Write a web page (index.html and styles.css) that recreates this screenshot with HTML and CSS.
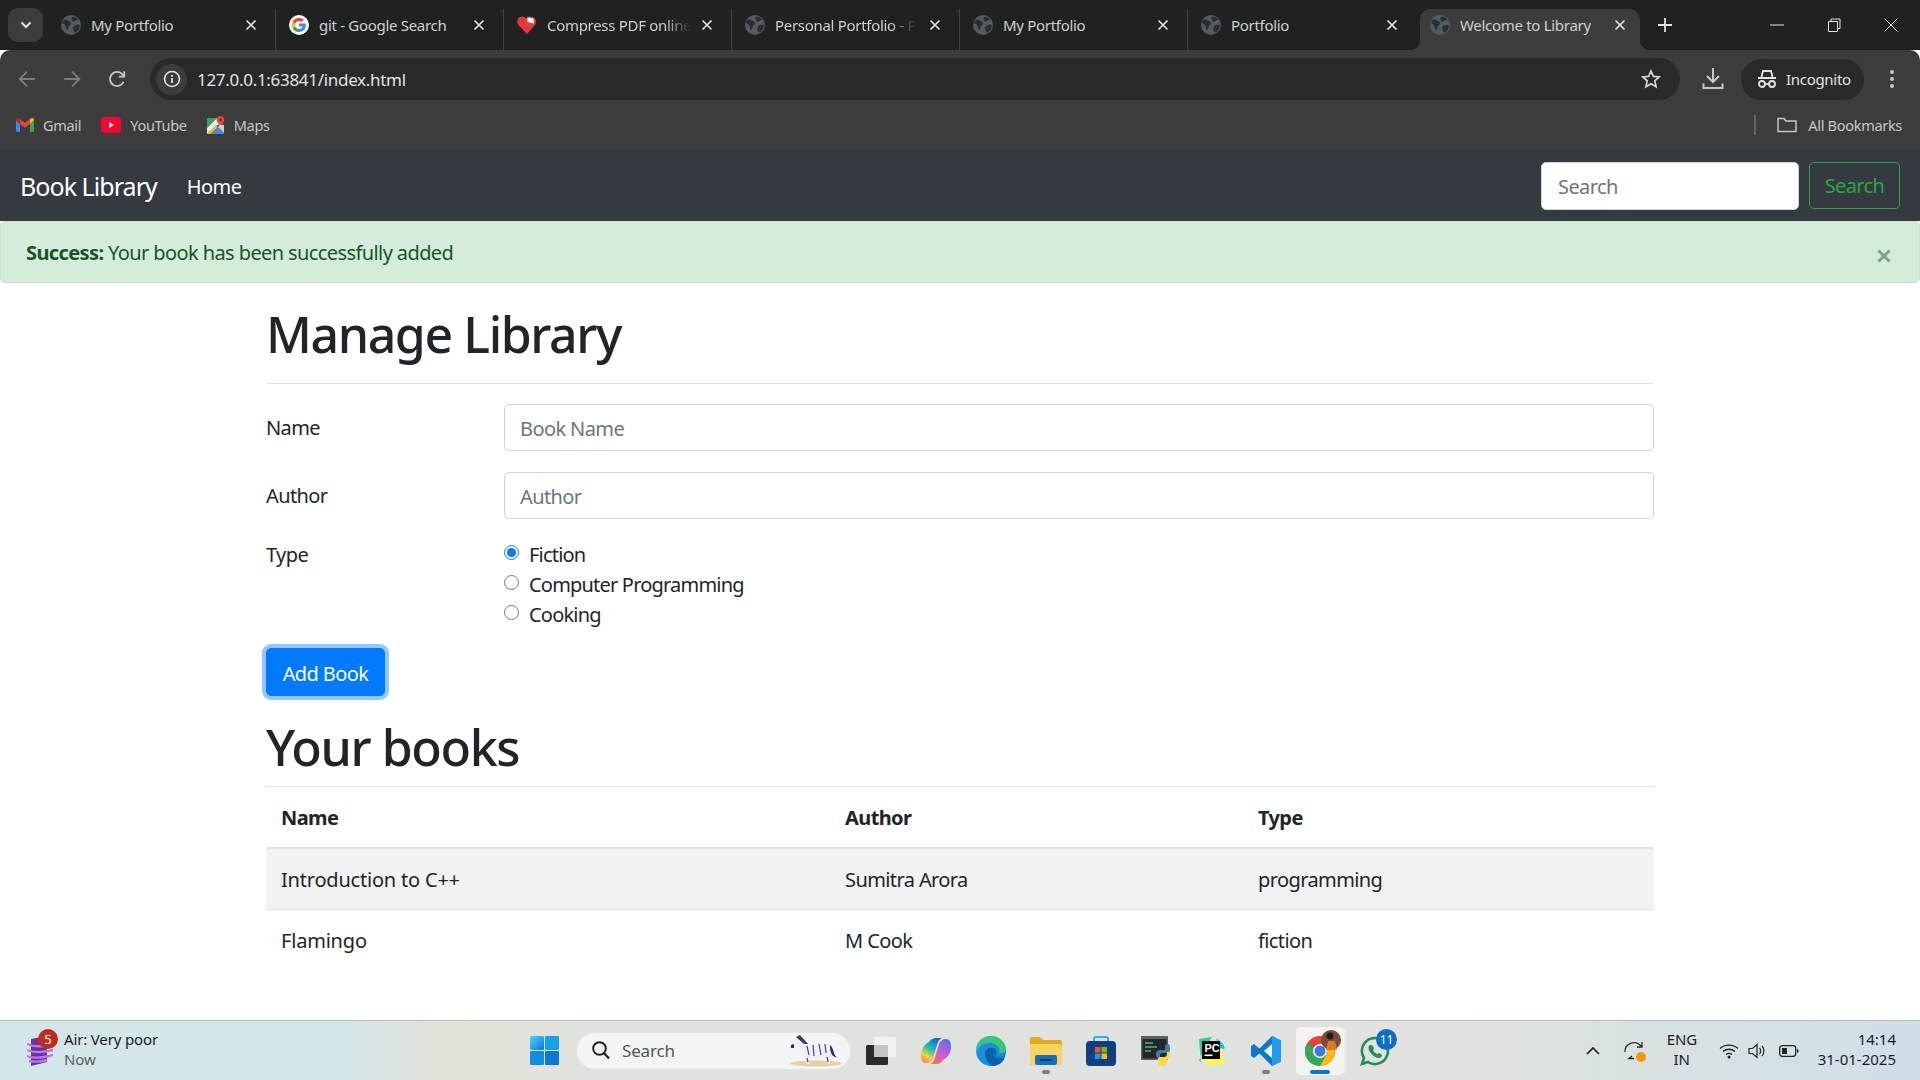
FILE: index.html
```html
<!DOCTYPE html>
<html lang="en">

<head>
    <meta charset="UTF-8">
    <title>Welcome to Library</title>
    <link rel="stylesheet" href="styles.css">
</head>

<body>
    <svg class="sprites" width="0" height="0">
        <symbol id="globe" viewBox="0 0 18 18">
            <circle cx="9" cy="9" r="9" fill="#555a60" />
            <path d="M2 4.500c2-1 3.500-.5 4.500.5s2.500 1 2.500 2.500-1.500 1.500-2 3-.5 3-1.500 3-1-2-1.500-3.500S2.500 8 1 7.500zM10 1.500c2 0 4 .5 5.500 2.500-1 1-2.500.5-3 1.500s-2 .5-2.500-.5-1-2.500 0-3.500zM12 10c1.500-1 3.500-1.500 5-1 0 3-1.500 5.500-4 7-1-1-2-2-2-3.500s0-2 1-2.500z" fill="#2b2d30" />
        </symbol>
        <symbol id="close-x" viewBox="0 0 12 12">
            <path d="M1.500 1.500l9 9m0-9l-9 9" fill="none" stroke="currentColor" stroke-width="1.700" />
        </symbol>
    </svg>

    <header class="chrome">
        <div class="tab-strip">
            <div class="tab-menu">
                <svg width="12" height="8" viewBox="0 0 12 8"><path d="M1.500 1.500L6 6l4.500-4.500" fill="none" stroke="#e3e3e3" stroke-width="2" /></svg>
            </div>
            <div class="tab">
                <svg class="tab-icon"><use href="#globe" /></svg>
                <span class="tab-title">My Portfolio</span>
                <svg class="tab-close"><use href="#close-x" /></svg>
            </div>
            <div class="tab">
                <svg class="tab-icon" viewBox="0 0 20 20">
                    <circle cx="10" cy="10" r="10" fill="#fff" />
                    <path d="M16.500 8.500H10v3h3.700c-.5 1.600-2 2.500-3.700 2.500V17c3.800 0 6.800-2.700 6.800-6.700 0-.7-.1-1.300-.3-1.800z" fill="#4285f4" />
                    <path d="M10 14c-1.800 0-3.300-1.100-3.800-2.800l-2.700 2c1.200 2.300 3.700 3.800 6.500 3.800z" fill="#34a853" />
                    <path d="M6.200 11.200C6 10.400 6 9.600 6.200 8.800l-2.700-2c-1 2-1 4.400 0 6.400z" fill="#fbbc05" />
                    <path d="M10 6c1 0 1.900.3 2.600 1l2.300-2.300C13.600 3.500 11.900 3 10 3 7.200 3 4.700 4.500 3.500 6.800l2.700 2C6.700 7.100 8.200 6 10 6z" fill="#ea4335" />
                </svg>
                <span class="tab-title">git - Google Search</span>
                <svg class="tab-close"><use href="#close-x" /></svg>
            </div>
            <div class="tab">
                <svg class="tab-icon" viewBox="0 0 20 20">
                    <path d="M10 19L1.800 10.500C-.5 8-.2 3.900 2.500 2.300 5 .9 7.500 1.500 9 3.500 10.500 1.500 14 .8 16.500 2.300c3 1.800 3.200 5.800 1 8.200z" fill="#e53935" />
                    <path d="M10.500 2.500l6 1 .5 5-6.500-1.500z" fill="#fff" />
                </svg>
                <span class="tab-title faded">Compress PDF online</span>
                <svg class="tab-close"><use href="#close-x" /></svg>
            </div>
            <div class="tab">
                <svg class="tab-icon"><use href="#globe" /></svg>
                <span class="tab-title faded">Personal Portfolio - P</span>
                <svg class="tab-close"><use href="#close-x" /></svg>
            </div>
            <div class="tab">
                <svg class="tab-icon"><use href="#globe" /></svg>
                <span class="tab-title">My Portfolio</span>
                <svg class="tab-close"><use href="#close-x" /></svg>
            </div>
            <div class="tab">
                <svg class="tab-icon"><use href="#globe" /></svg>
                <span class="tab-title">Portfolio</span>
                <svg class="tab-close"><use href="#close-x" /></svg>
            </div>
            <div class="tab active">
                <svg class="tab-icon"><use href="#globe" /></svg>
                <span class="tab-title">Welcome to Library</span>
                <svg class="tab-close"><use href="#close-x" /></svg>
            </div>
            <svg class="new-tab" width="14" height="14" viewBox="0 0 14 14"><path d="M7 0v14M0 7h14" stroke="#e3e3e3" stroke-width="1.800" /></svg>
            <div class="window-controls">
                <svg width="14" height="14" viewBox="0 0 14 14"><path d="M0 7h14" stroke="#e3e3e3" stroke-width="1" /></svg>
                <svg width="14" height="14" viewBox="0 0 14 14"><path d="M1.500 3.500h9v10h-9zM4 3.500V1h9v9.500h-2.500" fill="none" stroke="#e3e3e3" /></svg>
                <svg width="14" height="14" viewBox="0 0 14 14"><path d="M.5.500l13 13m0-13l-13 13" stroke="#e3e3e3" stroke-width="1" /></svg>
            </div>
        </div>

        <div class="toolbar">
            <svg class="nav-icon" viewBox="0 0 16 16"><path d="M15 8H2m6-6.500L1.500 8 8 14.500" fill="none" stroke="#7d7d7d" stroke-width="1.600" /></svg>
            <svg class="nav-icon" viewBox="0 0 16 16"><path d="M1 8h13M8 1.500L14.500 8 8 14.500" fill="none" stroke="#7d7d7d" stroke-width="1.600" /></svg>
            <svg class="nav-icon" viewBox="0 0 16 16"><path d="M13.800 10.500A6.300 6.300 0 1 1 12.500 3.500L14.500 5.500M14.500 1v4.800H9.700" fill="none" stroke="#c7c7c7" stroke-width="1.600" /></svg>
            <div class="omnibox">
                <div class="site-info">
                    <svg width="18" height="18" viewBox="0 0 18 18"><circle cx="9" cy="9" r="7.500" fill="none" stroke="#e3e3e3" stroke-width="1.600" /><path d="M9 8v5M9 5v1.800" stroke="#e3e3e3" stroke-width="1.800" /></svg>
                </div>
                <span class="url">127.0.0.1:63841/index.html</span>
                <svg class="star" width="20" height="20" viewBox="0 0 20 20"><path d="M10 2l2.400 5.400 5.800.6-4.400 3.900 1.300 5.800L10 14.700l-5.100 3 1.300-5.800L1.800 8l5.800-.6z" fill="none" stroke="#d5d5d5" stroke-width="1.700" /></svg>
            </div>
            <svg class="download" width="22" height="24" viewBox="0 0 22 24"><path d="M11 1v14m-6-6l6 6 6-6M1.500 16.500v4.500h19v-4.500" fill="none" stroke="#c7c7c7" stroke-width="2" /></svg>
            <div class="incognito">
                <svg width="20" height="20" viewBox="0 0 20 20">
                    <path d="M4.500 8L6 2h8l1.500 6M1 9h18" fill="none" stroke="#e3e3e3" stroke-width="1.800" />
                    <circle cx="5" cy="15" r="3" fill="none" stroke="#e3e3e3" stroke-width="1.800" />
                    <circle cx="15" cy="15" r="3" fill="none" stroke="#e3e3e3" stroke-width="1.800" />
                    <path d="M8 15h4" stroke="#e3e3e3" stroke-width="1.800" />
                </svg>
                <span>Incognito</span>
            </div>
            <svg class="kebab" width="6" height="20" viewBox="0 0 6 20"><circle cx="3" cy="3" r="2" fill="#c7c7c7" /><circle cx="3" cy="10" r="2" fill="#c7c7c7" /><circle cx="3" cy="17" r="2" fill="#c7c7c7" /></svg>
        </div>

        <div class="bookmarks">
            <div class="bookmark">
                <svg width="18" height="14" viewBox="0 0 18 14">
                    <path d="M0 2v10.500c0 .8.600 1.500 1.500 1.500H4V6z" fill="#4285f4" />
                    <path d="M14 6v8h2.500c.9 0 1.500-.7 1.500-1.500V2z" fill="#34a853" />
                    <path d="M4 6l5 3.800L14 6V1L9 4.800 4 1z" fill="#ea4335" />
                    <path d="M0 2l4 4V1L2.500.2C1.300-.4 0 .6 0 2z" fill="#c5221f" />
                    <path d="M18 2l-4 4V1l1.500-.8C16.700-.4 18 .6 18 2z" fill="#fbbc04" />
                </svg>
                <span>Gmail</span>
            </div>
            <div class="bookmark">
                <svg width="20" height="16" viewBox="0 0 20 16">
                    <rect width="20" height="16" rx="4" fill="#ff0033" />
                    <path d="M8 5l5 3-5 3z" fill="#fff" />
                </svg>
                <span>YouTube</span>
            </div>
            <div class="bookmark">
                <svg width="18" height="18" viewBox="0 0 18 18">
                    <path d="M0 2h10L0 12z" fill="#34a853" />
                    <path d="M0 12L10 2l3 6-4 2-9 8z" fill="#e8eaed" />
                    <path d="M0 18l9-8 2 1-7 7z" fill="#fbbc04" />
                    <path d="M4 18l7-7 6 6v1z" fill="#4285f4" />
                    <path d="M13 8l4 1v8l-6-6z" fill="#c9cdd2" />
                    <path d="M13.500 0a3.800 3.800 0 0 0-3.800 3.800c0 2.800 3.800 5.700 3.800 5.700s3.800-2.900 3.800-5.700A3.800 3.800 0 0 0 13.500 0z" fill="#ea4335" />
                    <circle cx="13.500" cy="3.800" r="1.300" fill="#a50e0e" />
                </svg>
                <span>Maps</span>
            </div>
            <div class="all-bookmarks">
                <svg width="20" height="16" viewBox="0 0 20 16"><path d="M1 14.500v-13h6l2 2.500h10v10.500z" fill="none" stroke="#c7c7c7" stroke-width="1.500" /></svg>
                <span>All Bookmarks</span>
            </div>
        </div>
    </header>

    <nav class="navbar">
        <a class="navbar-brand">Book Library</a>
        <a class="nav-link">Home</a>
        <form class="navbar-search">
            <input type="text" class="search-input" placeholder="Search">
            <button type="button" class="search-btn">Search</button>
        </form>
    </nav>

    <div class="alert">
        <span><strong>Success:</strong> Your book has been successfully added</span>
        <svg class="alert-close" width="14" height="14" viewBox="0 0 14 14"><path d="M1.500 1.500l11 11m0-11l-11 11" stroke="#7aa584" stroke-width="3" /></svg>
    </div>

    <main class="container">
        <h1>Manage Library</h1>
        <hr>
        <form>
            <div class="form-row">
                <label>Name</label>
                <input type="text" class="form-control" placeholder="Book Name">
            </div>
            <div class="form-row">
                <label>Author</label>
                <input type="text" class="form-control" placeholder="Author">
            </div>
            <div class="form-row type-row">
                <label>Type</label>
                <div class="radios">
                    <label class="radio"><input type="radio" name="type" checked>Fiction</label>
                    <label class="radio"><input type="radio" name="type">Computer Programming</label>
                    <label class="radio"><input type="radio" name="type">Cooking</label>
                </div>
            </div>
            <button type="button" class="btn-primary">Add Book</button>
        </form>

        <h1 class="books-title">Your books</h1>
        <hr class="books-rule">
        <table>
            <thead>
                <tr>
                    <th class="col-name">Name</th>
                    <th class="col-author">Author</th>
                    <th>Type</th>
                </tr>
            </thead>
            <tbody>
                <tr>
                    <td>Introduction to C++</td>
                    <td>Sumitra Arora</td>
                    <td>programming</td>
                </tr>
                <tr>
                    <td>Flamingo</td>
                    <td>M Cook</td>
                    <td>fiction</td>
                </tr>
            </tbody>
        </table>
    </main>

    <footer class="taskbar">
        <div class="weather">
            <div class="weather-icon">
                <svg width="26" height="32" viewBox="0 0 26 32">
                    <path d="M4 4l16-3v26L4 31z" fill="#6d2fa3" />
                    <path d="M0 9c7 3 15 3 25 1M0 15c7 3 15 3 26 0M0 21c7 3 15 2 26-1M2 26c6 1 12 1 18-1" fill="none" stroke="#b57ce0" stroke-width="2.400" />
                </svg>
                <span class="weather-badge">5</span>
            </div>
            <div class="weather-text">
                <span>Air: Very poor</span>
                <span class="weather-now">Now</span>
            </div>
        </div>

        <div class="task-center">
            <svg class="win-logo" width="29" height="29" viewBox="0 0 29 29">
                <defs>
                    <linearGradient id="win" x1="0" y1="0" x2="1" y2="1">
                        <stop offset="0" stop-color="#4fd2ff" />
                        <stop offset="1" stop-color="#0a78d6" />
                    </linearGradient>
                </defs>
                <rect width="14" height="14" rx="1.500" fill="url(#win)" />
                <rect x="15" width="14" height="14" rx="1" fill="#17a2ec" />
                <rect y="15" width="14" height="14" rx="1" fill="#0f8fe4" />
                <rect x="15" y="15" width="14" height="14" rx="1" fill="#0a78d6" />
            </svg>
            <div class="task-search">
                <svg width="18" height="19" viewBox="0 0 18 19"><circle cx="7.500" cy="7.500" r="6.300" fill="none" stroke="#222" stroke-width="2" /><path d="M12 12l5 5.500" stroke="#222" stroke-width="2.200" /></svg>
                <span>Search</span>
                <svg class="zebra" width="54" height="33" viewBox="0 0 54 33">
                    <ellipse cx="26" cy="29.500" rx="26" ry="3" fill="#e8cfa6" />
                    <path d="M1 11L7 3l2-2 2 3 7 7 15-2c5 0 8 3 8 7l-1 14h-2l-2-8-6 2H20l-1 6h-2l-2-7-2-8-5-2-5 1z" fill="#efeef5" />
                    <path d="M17 12l2 9M23 11l1 11M29 10l2 11M35 10l1 9M17 24l1 4M37 23l1 5" stroke="#4a4573" stroke-width="1.200" fill="none" />
                    <path d="M6 3l4-2 8 9-4 0z" fill="#3f3a66" />
                    <path d="M40 11c4 3 3 9 7 13l-4-2c-2-2-3-6-3-9z" fill="#2f2a6b" />
                    <path d="M1 11l3-1 0 4-3 0z" fill="#2f2a50" />
                </svg>
            </div>
            <div class="task-icon">
                <svg width="30" height="28" viewBox="0 0 30 28">
                    <rect x="0" y="8" width="22" height="20" rx="1.500" fill="#2a2a2a" />
                    <rect x="8" y="0" width="22" height="20" rx="1.500" fill="#f2f3f1" />
                    <rect x="8" y="8" width="14" height="12" fill="#c4c4c4" />
                </svg>
            </div>
            <div class="task-icon">
                <svg width="30" height="30" viewBox="0 0 30 30">
                    <defs>
                        <linearGradient id="cop1" x1="0.700" y1="0" x2="0.200" y2="1">
                            <stop offset="0" stop-color="#1a5fe0" />
                            <stop offset=".45" stop-color="#22c3a6" />
                            <stop offset=".75" stop-color="#f4d23c" />
                            <stop offset="1" stop-color="#f7814a" />
                        </linearGradient>
                        <linearGradient id="cop2" x1="0.700" y1="0" x2="0.200" y2="1">
                            <stop offset="0" stop-color="#5b6df0" />
                            <stop offset=".45" stop-color="#c35be0" />
                            <stop offset=".8" stop-color="#f2609a" />
                            <stop offset="1" stop-color="#f7814a" />
                        </linearGradient>
                    </defs>
                    <path d="M8 6C10 3 12 2 15 2H21C18 3 17 6 16 9L12 22C11 25 8 27 5 27C1 27 0 23 0 19C0 14 3 8 8 6Z" fill="url(#cop1)" />
                    <path d="M22 24C20 27 18 28 15 28H9C12 27 13 24 14 21L18 8C19 5 22 3 25 3C29 3 30 7 30 11C30 16 27 22 22 24Z" fill="url(#cop2)" />
                </svg>
            </div>
            <div class="task-icon">
                <svg width="30" height="30" viewBox="0 0 30 30">
                    <defs>
                        <linearGradient id="edge" x1="0" y1="0" x2="1" y2="1">
                            <stop offset="0" stop-color="#2fc6e8" />
                            <stop offset="1" stop-color="#0b5fb3" />
                        </linearGradient>
                    </defs>
                    <circle cx="15" cy="15" r="15" fill="url(#edge)" />
                    <path d="M1 17C3 8 12 5 20 8c5 2 9 6 9 10-1 2-5 3-8 2 2-2 2-6-1-8-4-3-11-1-11 6 0 6 6 10 12 11-8 3-19-2-20-12z" fill="#1a8fd8" />
                    <path d="M30 14c0-8-7-14-15-14C7 0 1 5 0 13 3 7 10 5 16 7c6 2 9 6 7 10 3 1 6-1 7-3z" fill="#37c871" />
                    <path d="M9 17c0-4 4-6 8-5 2 1 4 3 3 6-1 1-3 2-4 1 5 3 8 6 13 2-2 6-7 9-13 9-4-2-7-8-7-13z" fill="#0b5fb3" />
                </svg>
            </div>
            <div class="task-icon running">
                <svg width="32" height="28" viewBox="0 0 32 28">
                    <path d="M0 2c0-1 1-2 2-2h8l3 3h17c1 0 2 1 2 2v21c0 1-1 2-2 2H2c-1 0-2-1-2-2z" fill="#e5a823" />
                    <path d="M0 7h30c1 0 2 1 2 2v17c0 1-1 2-2 2H2c-1 0-2-1-2-2z" fill="#fbd35d" />
                    <rect x="5" y="18" width="22" height="10" rx="2" fill="#0f70c0" />
                    <rect x="10" y="22" width="12" height="2" fill="#063a6e" />
                </svg>
            </div>
            <div class="task-icon">
                <svg width="30" height="30" viewBox="0 0 30 30">
                    <path d="M8 6V3c0-1 1-2 2-2h10c1 0 2 1 2 2v3" fill="none" stroke="#27b0f0" stroke-width="2" />
                    <rect y="5" width="30" height="25" rx="4" fill="#123f7e" />
                    <rect x="9" y="11" width="5.500" height="5.500" fill="#f25022" />
                    <rect x="15.500" y="11" width="5.500" height="5.500" fill="#7fba00" />
                    <rect x="9" y="17.500" width="5.500" height="5.500" fill="#00a4ef" />
                    <rect x="15.500" y="17.500" width="5.500" height="5.500" fill="#ffb900" />
                </svg>
            </div>
            <div class="task-icon">
                <svg width="30" height="30" viewBox="0 0 30 30">
                    <rect x="0" y="0" width="27" height="24" fill="#5a6168" />
                    <rect x="1.500" y="3" width="24" height="19.500" fill="#23282d" />
                    <path d="M4 7h8M4 11h12M4 15h6" stroke="#58b368" stroke-width="1.500" />
                    <path d="M15 18c0-3 2-4 4-4h5v-3c0-2 1-3 3-3s2 3 2 5c0 3-1 4-3 4h-5c-1 0-2 1-2 2v3h-2c-1 0-2-2-2-4z" fill="#3f7cad" />
                    <path d="M17 27c0 2 2 3 4 3s5-1 5-3v-3c0-1 2-1 3-3 1-2 0-5-2-5h-1v2c0 2-1 3-3 3h-4c-1 0-2 1-2 2z" fill="#ffd845" />
                </svg>
            </div>
            <div class="task-icon">
                <svg width="30" height="30" viewBox="0 0 30 30">
                    <path d="M3 3l13-2-6 9-7 14 2 3z" fill="#21d789" />
                    <path d="M20 2l7 6 2 4-4 2z" fill="#07c3f2" />
                    <path d="M5 22l21-10 2 16-16 1-4-3z" fill="#fcf84a" />
                    <rect x="6" y="5" width="18" height="18" fill="#000" />
                    <text class="pycharm-text" x="8.500" y="15.500">PC</text>
                    <rect x="8.500" y="18.500" width="8" height="1.600" fill="#fff" />
                </svg>
            </div>
            <div class="task-icon running">
                <svg width="30" height="30" viewBox="0 0 30 30">
                    <path d="M21 0l9 4.500v21L21 30 8.500 17.500 3 22l-3-2v-10l3-2 5.500 4.500z" fill="#0a7ac9" />
                    <path d="M21 0l9 4.500v21L21 30z" fill="#1f9cf0" />
                    <path d="M21 8l-8 7 8 7z" fill="#fff" opacity=".95" />
                </svg>
            </div>
            <div class="task-icon chrome-app">
                <svg width="30" height="30" viewBox="0 0 30 30">
                    <circle cx="15" cy="15" r="15" fill="#ea4335" />
                    <path d="M15 15L2 7.500A15 15 0 0 0 15 30l7.500-13z" fill="#34a853" />
                    <path d="M15 8h13a15 15 0 0 1-13 22l7.500-13z" fill="#fbbc05" />
                    <circle cx="15" cy="15" r="7" fill="#fff" />
                    <circle cx="15" cy="15" r="5.500" fill="#3b78e7" />
                </svg>
                <svg class="chrome-avatar" width="20" height="20" viewBox="0 0 20 20">
                    <circle cx="10" cy="10" r="10" fill="#7a4a3a" />
                    <circle cx="9" cy="6" r="3.500" fill="#2b1a14" />
                    <path d="M5 20l2-9h7l2 9z" fill="#e07a1f" />
                </svg>
            </div>
            <div class="task-icon">
                <svg width="30" height="30" viewBox="0 0 30 30">
                    <path d="M15 2a13 13 0 0 0-11 20L2 28l6-2a13 13 0 1 0 7-24z" fill="none" stroke="#1e8e5a" stroke-width="2.600" />
                    <path d="M10 9c-2 1-2 4 0 7s6 6 9 6c2 0 3-2 3-3l-3-2-2 1c-2-1-3-2-4-4l1-2-2-3z" fill="#1e8e5a" />
                </svg>
                <span class="whatsapp-badge">11</span>
            </div>
        </div>

        <div class="tray">
            <svg class="tray-chevron" width="14" height="8" viewBox="0 0 14 8"><path d="M1 7l6-6 6 6" fill="none" stroke="#1f1f1f" stroke-width="1.700" /></svg>
            <div class="tray-sync">
                <svg width="20" height="20" viewBox="0 0 20 20"><path d="M1 11a9 8.500 0 0 1 15-7l2 2m0-5v5h-5M8 15l-3 2.500h5" fill="none" stroke="#2a2a2a" stroke-width="1.300" /></svg>
                <span class="sync-dot"></span>
            </div>
            <div class="tray-lang">ENG<br>IN</div>
            <svg class="tray-wifi" width="20" height="16" viewBox="0 0 20 16"><path d="M1 5.500c5-4.500 13-4.500 18 0M4 8.500c3.500-3 8.500-3 12 0M7 11.500c2-1.500 4-1.500 6 0" fill="none" stroke="#222" stroke-width="1.300" /><circle cx="10" cy="14" r="1.500" fill="#222" /></svg>
            <svg class="tray-volume" width="20" height="16" viewBox="0 0 20 16"><path d="M1 5.500h3.500L9 1.500v13l-4.500-4H1zM11.500 5c1.500 1.500 1.500 4.500 0 6M14 3c2.500 2.500 2.500 7.500 0 10" fill="none" stroke="#222" stroke-width="1.200" /></svg>
            <svg class="tray-battery" width="20" height="12" viewBox="0 0 20 12"><rect x=".7" y=".7" width="16" height="10.600" rx="2.500" fill="none" stroke="#222" stroke-width="1.300" /><rect x="3" y="3" width="5" height="6" fill="#222" /><path d="M18 4l1.500 1v2L18 8z" fill="#222" /></svg>
            <div class="tray-clock">14:14<br>31-01-2025</div>
        </div>
    </footer>
</body>

</html>
```

FILE: styles.css
```css
* {
    box-sizing: border-box;
}

body {
    margin: 0;
    height: 100vh;
    display: flex;
    flex-direction: column;
    overflow: hidden;
    background-color: white;
    color: #212529;
    font-family: "Noto Sans", "Open Sans", sans-serif;
    font-size: 20px;
    letter-spacing: -0.03em;
}

.sprites {
    display: none;
}

/* browser frame */
.chrome {
    height: 150px;
    flex-shrink: 0;
    color: #d0d0d0;
    font-size: 15px;
    letter-spacing: -0.02em;
}

.tab-strip {
    height: 50px;
    display: flex;
    align-items: flex-end;
    padding-left: 8px;
    background-color: #202222;
}

.tab-menu {
    width: 35px;
    height: 34px;
    margin: 0 5px 8px 0;
    display: flex;
    align-items: center;
    justify-content: center;
    background-color: #3c3c3c;
    border-radius: 10px;
}

.tab {
    width: 228px;
    height: 41px;
    padding: 0 18px 9px 13px;
    display: flex;
    align-items: center;
    gap: 10px;
    border-right: 1px solid #404242;
    background-clip: padding-box;
    position: relative;
}

.tab-icon {
    width: 20px;
    height: 20px;
    flex-shrink: 0;
}

.tab-title {
    overflow: hidden;
    white-space: nowrap;
}

.faded {
    -webkit-mask-image: linear-gradient(to right, black 82%, transparent 100%);
    mask-image: linear-gradient(to right, black 82%, transparent 100%);
}

.tab-close {
    width: 12px;
    height: 12px;
    flex-shrink: 0;
    margin-left: auto;
    color: #e3e3e3;
}

.tab:nth-child(7) {
    border-right: none;
    width: 232px;
    padding-right: 22px;
}

.tab.active {
    width: 220px;
    padding: 0 14px 9px 10px;
    background-color: #3c3c3c;
    border: none;
    border-radius: 10px 10px 0 0;
}

.tab.active::before,
.tab.active::after {
    content: "";
    position: absolute;
    bottom: 0;
    width: 10px;
    height: 10px;
}

.tab.active::before {
    left: -10px;
    background: radial-gradient(circle at 0 0, transparent 10px, #3c3c3c 10.500px);
}

.tab.active::after {
    right: -10px;
    background: radial-gradient(circle at 100% 0, transparent 10px, #3c3c3c 10.500px);
}

.new-tab {
    margin: 0 0 18px 18px;
}

.window-controls {
    margin-left: auto;
    width: 150px;
    padding-right: 22px;
    display: flex;
    justify-content: space-between;
    padding-bottom: 18px;
}

.toolbar {
    height: 50px;
    display: flex;
    align-items: center;
    padding: 8px 18px 0 18px;
    background-color: #3c3c3c;
    border-radius: 10px 10px 0 0;
}

.nav-icon {
    width: 18px;
    height: 18px;
    margin-right: 27px;
    flex-shrink: 0;
}

.omnibox {
    height: 42px;
    width: 1530px;
    margin-left: -3px;
    display: flex;
    align-items: center;
    padding: 0 19px 0 6px;
    background-color: #292a2a;
    border-radius: 21px;
}

.site-info {
    width: 31px;
    height: 31px;
    display: flex;
    align-items: center;
    justify-content: center;
    background-color: #3c3c3c;
    border-radius: 50%;
}

.url {
    margin-left: 10px;
    color: #e3e3e3;
    font-size: 17px;
}

.star {
    margin-left: auto;
}

.download {
    margin-left: 22px;
}

.incognito {
    width: 123px;
    height: 41px;
    margin-left: 17px;
    padding-left: 16px;
    display: flex;
    align-items: center;
    gap: 9px;
    background-color: #292a2a;
    border-radius: 21px;
    color: #e3e3e3;
    font-size: 15px;
}

.kebab {
    margin-left: 25px;
}

.bookmarks {
    height: 50px;
    display: flex;
    align-items: center;
    padding: 0 18px 0 16px;
    gap: 20px;
    background-color: #3c3c3c;
    font-size: 14.500px;
}

.bookmark {
    display: flex;
    align-items: center;
    gap: 9px;
    color: #c7c7c7;
}

.all-bookmarks {
    margin-left: auto;
    padding-left: 21px;
    display: flex;
    align-items: center;
    gap: 11px;
    height: 20px;
    border-left: 2px solid #5f5f5f;
    color: #c7c7c7;
}

/* page navbar */
.navbar {
    height: 71px;
    flex-shrink: 0;
    display: flex;
    align-items: center;
    padding: 0 20px;
    background-color: #343a40;
    color: white;
}

.navbar-brand {
    font-size: 25px;
    letter-spacing: -0.95px;
    margin-right: 30px;
}

.nav-link {
    padding-top: 1px;
}

.navbar-search {
    margin-left: auto;
    display: flex;
    gap: 10px;
}

.search-input {
    width: 258px;
    height: 48px;
    padding: 2px 16px 0;
    border: 1px solid #ced4da;
    border-radius: 5px;
    font: inherit;
    letter-spacing: inherit;
}

.search-btn {
    width: 91px;
    height: 47px;
    background: transparent;
    border: 1px solid #28a745;
    border-radius: 5px;
    color: #28a745;
    font: inherit;
    letter-spacing: inherit;
}

input::placeholder {
    color: #6c757d;
}

.alert {
    height: 62px;
    flex-shrink: 0;
    display: flex;
    align-items: center;
    justify-content: space-between;
    padding: 0 28px 0 25px;
    background-color: #d4edda;
    border: 1px solid #c3e6cb;
    border-radius: 5px;
    color: #155724;
}

.alert-close {
    margin-top: 7px;
}

/* main content */
.container {
    flex: 1;
    width: 1388px;
    margin: 0 auto;
    padding-top: 21px;
}

h1 {
    margin: 0;
    font-size: 50px;
    font-weight: 500;
    line-height: 60px;
    letter-spacing: -1.4px;
}

hr {
    margin: 19px 0 20px;
    border: none;
    border-top: 1px solid #dee2e6;
}

.form-row {
    display: grid;
    grid-template-columns: 238px 1fr;
    align-items: center;
    margin-bottom: 21px;
}

.form-control {
    height: 47px;
    padding: 1px 15px 0;
    border: 1px solid #ced4da;
    border-radius: 5px;
    font: inherit;
    letter-spacing: inherit;
}

.type-row {
    align-items: start;
    line-height: 30px;
    margin-bottom: 18px;
}

.radios {
    display: flex;
    flex-direction: column;
    letter-spacing: -0.04em;
}

.radio {
    display: flex;
    align-items: center;
    gap: 10px;
    height: 30px;
}

.radio input {
    width: 15px;
    height: 15px;
    margin: -5px 0 0;
    accent-color: #007bff;
}

.btn-primary {
    width: 119px;
    height: 48px;
    padding-top: 3px;
    background-color: #007bff;
    border: 1px solid #007bff;
    border-radius: 5px;
    box-shadow: 0 0 0 4px rgba(38, 143, 255, 0.5);
    color: white;
    font: inherit;
    letter-spacing: inherit;
}

.books-title {
    margin-top: 21px;
}

.books-rule {
    margin: 9px 0 0;
}

table {
    width: 100%;
    border-collapse: collapse;
    table-layout: fixed;
}

th,
td {
    height: 61px;
    padding: 0 15px;
    text-align: left;
    border-top: 1px solid #dee2e6;
}

td {
    padding-top: 2px;
}

td:first-child {
    letter-spacing: -0.01em;
}

th {
    font-weight: 700;
    border-top: none;
    border-bottom: 2px solid #dee2e6;
}

.col-name {
    width: 564px;
}

.col-author {
    width: 413px;
}

tbody tr:nth-child(odd) {
    background-color: #f2f2f2;
}

/* windows taskbar */
.taskbar {
    height: 60px;
    flex-shrink: 0;
    display: flex;
    align-items: center;
    border-top: 1px solid #b9bdbb;
    background: linear-gradient(to right, #d3e7ea 0%, #d4e6e8 18%, #e4e1d6 24%, #dee3df 32%, #dfe2dd 60%, #e2e2de 72%, #d9e2e2 85%, #cfdfe8 100%);
    color: #1c1c1c;
    font-size: 15px;
    letter-spacing: -0.01em;
}

.weather {
    width: 530px;
    display: flex;
    align-items: center;
    padding-left: 27px;
    gap: 11px;
}

.weather-icon {
    position: relative;
    height: 32px;
    display: flex;
}

.weather-badge {
    position: absolute;
    top: -6px;
    left: 11px;
    width: 20px;
    height: 20px;
    border-radius: 50%;
    background-color: #c42b1c;
    color: white;
    font-size: 13px;
    line-height: 20px;
    text-align: center;
}

.weather-text {
    display: flex;
    flex-direction: column;
    line-height: 20px;
    margin-top: -3px;
}

.weather-now {
    color: #5e5e5e;
}

.task-center {
    display: flex;
    align-items: center;
}

.win-logo {
    margin-right: 17px;
}

.task-search {
    width: 275px;
    height: 38px;
    margin-right: 2px;
    padding: 0 6px 0 15px;
    display: flex;
    align-items: center;
    gap: 12px;
    background-color: #f3f5f3;
    border: 1px solid #e2e4e2;
    border-radius: 19px;
    color: #555;
    font-size: 17px;
    overflow: hidden;
}

.zebra {
    margin-left: auto;
}

.task-icon {
    width: 55px;
    height: 48px;
    position: relative;
    display: flex;
    align-items: center;
    justify-content: center;
}

.running::after,
.chrome-app::after {
    content: "";
    position: absolute;
    bottom: 1px;
    left: 50%;
    width: 8px;
    height: 4px;
    margin-left: -4px;
    border-radius: 2px;
    background-color: #7a7d7d;
}

.chrome-app {
    background-color: #f3f4f2;
    border-radius: 5px;
    box-shadow: 3px 0 0 -1px #eceeec;
    width: 48px;
    margin: 0 3px;
}

.chrome-app::after {
    width: 20px;
    margin-left: -10px;
    background-color: #0078d4;
}

.chrome-avatar {
    position: absolute;
    top: 3px;
    right: 3px;
}

.pycharm-text {
    fill: white;
    font-family: "Liberation Sans", sans-serif;
    font-size: 11px;
    font-weight: 700;
    letter-spacing: 0;
}

.whatsapp-badge {
    position: absolute;
    top: 2px;
    right: 5px;
    width: 21px;
    height: 21px;
    border-radius: 50%;
    background-color: #0a6ecb;
    color: white;
    font-size: 12px;
    line-height: 21px;
    text-align: center;
}

.tray {
    margin-left: auto;
    padding-right: 24px;
    display: flex;
    align-items: center;
}

.tray-sync {
    position: relative;
    display: flex;
    margin-left: 24px;
}

.sync-dot {
    position: absolute;
    right: -2px;
    bottom: -1px;
    width: 10px;
    height: 10px;
    border-radius: 50%;
    background-color: #f59a0c;
}

.tray-lang {
    width: 30px;
    margin: -3px 0 0 23px;
    text-align: center;
    line-height: 20px;
}

.tray-wifi {
    margin-left: 22px;
}

.tray-volume {
    margin-left: 9px;
}

.tray-battery {
    margin-left: 11px;
}

.tray-clock {
    margin: -3px 0 0 19px;
    text-align: right;
    line-height: 20px;
    font-size: 15px;
    letter-spacing: 0;
}
```
